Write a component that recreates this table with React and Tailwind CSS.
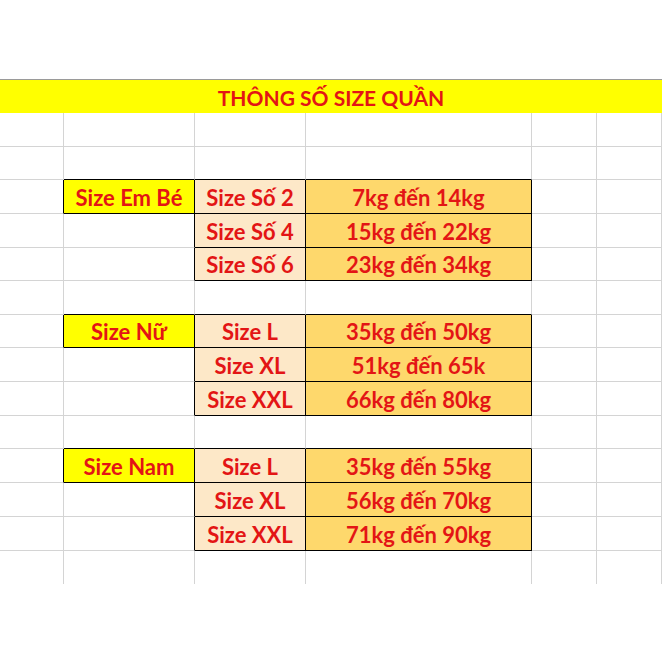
const groups = [
  {
    start: 2,
    label: "Size Em Bé",
    rows: [
      ["Size Số 2", "7kg đến 14kg"],
      ["Size Số 4", "15kg đến 22kg"],
      ["Size Số 6", "23kg đến 34kg"],
    ],
  },
  {
    start: 6,
    label: "Size Nữ",
    rows: [
      ["Size L", "35kg đến 50kg"],
      ["Size XL", "51kg đến 65k"],
      ["Size XXL", "66kg đến 80kg"],
    ],
  },
  {
    start: 10,
    label: "Size Nam",
    rows: [
      ["Size L", "35kg đến 55kg"],
      ["Size XL", "56kg đến 70kg"],
      ["Size XXL", "71kg đến 90kg"],
    ],
  },
];

const ROWS = 14;

// nội dung của ô (r, c) nếu nằm trong bảng
function cellAt(r, c) {
  for (const g of groups) {
    const i = r - g.start;
    if (c === 1 && i === 0) return { kind: "label", text: g.label };
    if (i >= 0 && i < 3) {
      if (c === 2) return { kind: "size", text: g.rows[i][0] };
      if (c === 3) return { kind: "range", text: g.rows[i][1] };
    }
  }
  return null;
}

const bg = {
  label: "bg-[#ffff00]",
  size: "bg-[#fde8c8]",
  range: "bg-[#fed86c]",
};

function Cell({ r, c }) {
  const cell = cellAt(r, c);
  const rightBlack = cell || cellAt(r, c + 1);
  const bottomBlack = cell || cellAt(r + 1, c);
  const last = r === ROWS - 1;
  return (
    <div
      className={[
        "flex items-center justify-center whitespace-nowrap border-r",
        rightBlack ? "border-r-black" : "border-r-[#d4d4d4]",
        last ? "" : "border-b",
        bottomBlack ? "border-b-black" : "border-b-[#d4d4d4]",
        cell ? bg[cell.kind] : "bg-white",
      ].join(" ")}
    >
      {cell && (
        <span className="text-[22px] font-bold leading-none text-[#e31515] pt-0.5">{cell.text}</span>
      )}
    </div>
  );
}

export default function App() {
  const cells = [];
  for (let r = 0; r < ROWS; r++) {
    for (let c = 0; c < 6; c++) cells.push(<Cell key={`${r}-${c}`} r={r} c={c} />);
  }
  return (
    <div className="w-[663px] h-[663px] bg-white overflow-hidden font-['Lato',sans-serif]">
      <div className="h-[79px]" />
      <div className="w-[662px] h-[34px] flex items-center justify-center bg-[#ffff00] border-t border-t-[#9a9a9a]">
        <span className="text-[21px] font-bold leading-none text-[#e31515] pt-0.5">THÔNG SỐ SIZE QUẦN</span>
      </div>
      <div className="grid w-[662px] grid-cols-[64px_131px_111px_226px_65px_65px] grid-rows-[34px_33px_34px_34px_33px_34px_33px_34px_34px_33px_34px_34px_34px_33px]">
        {cells}
      </div>
    </div>
  );
}
